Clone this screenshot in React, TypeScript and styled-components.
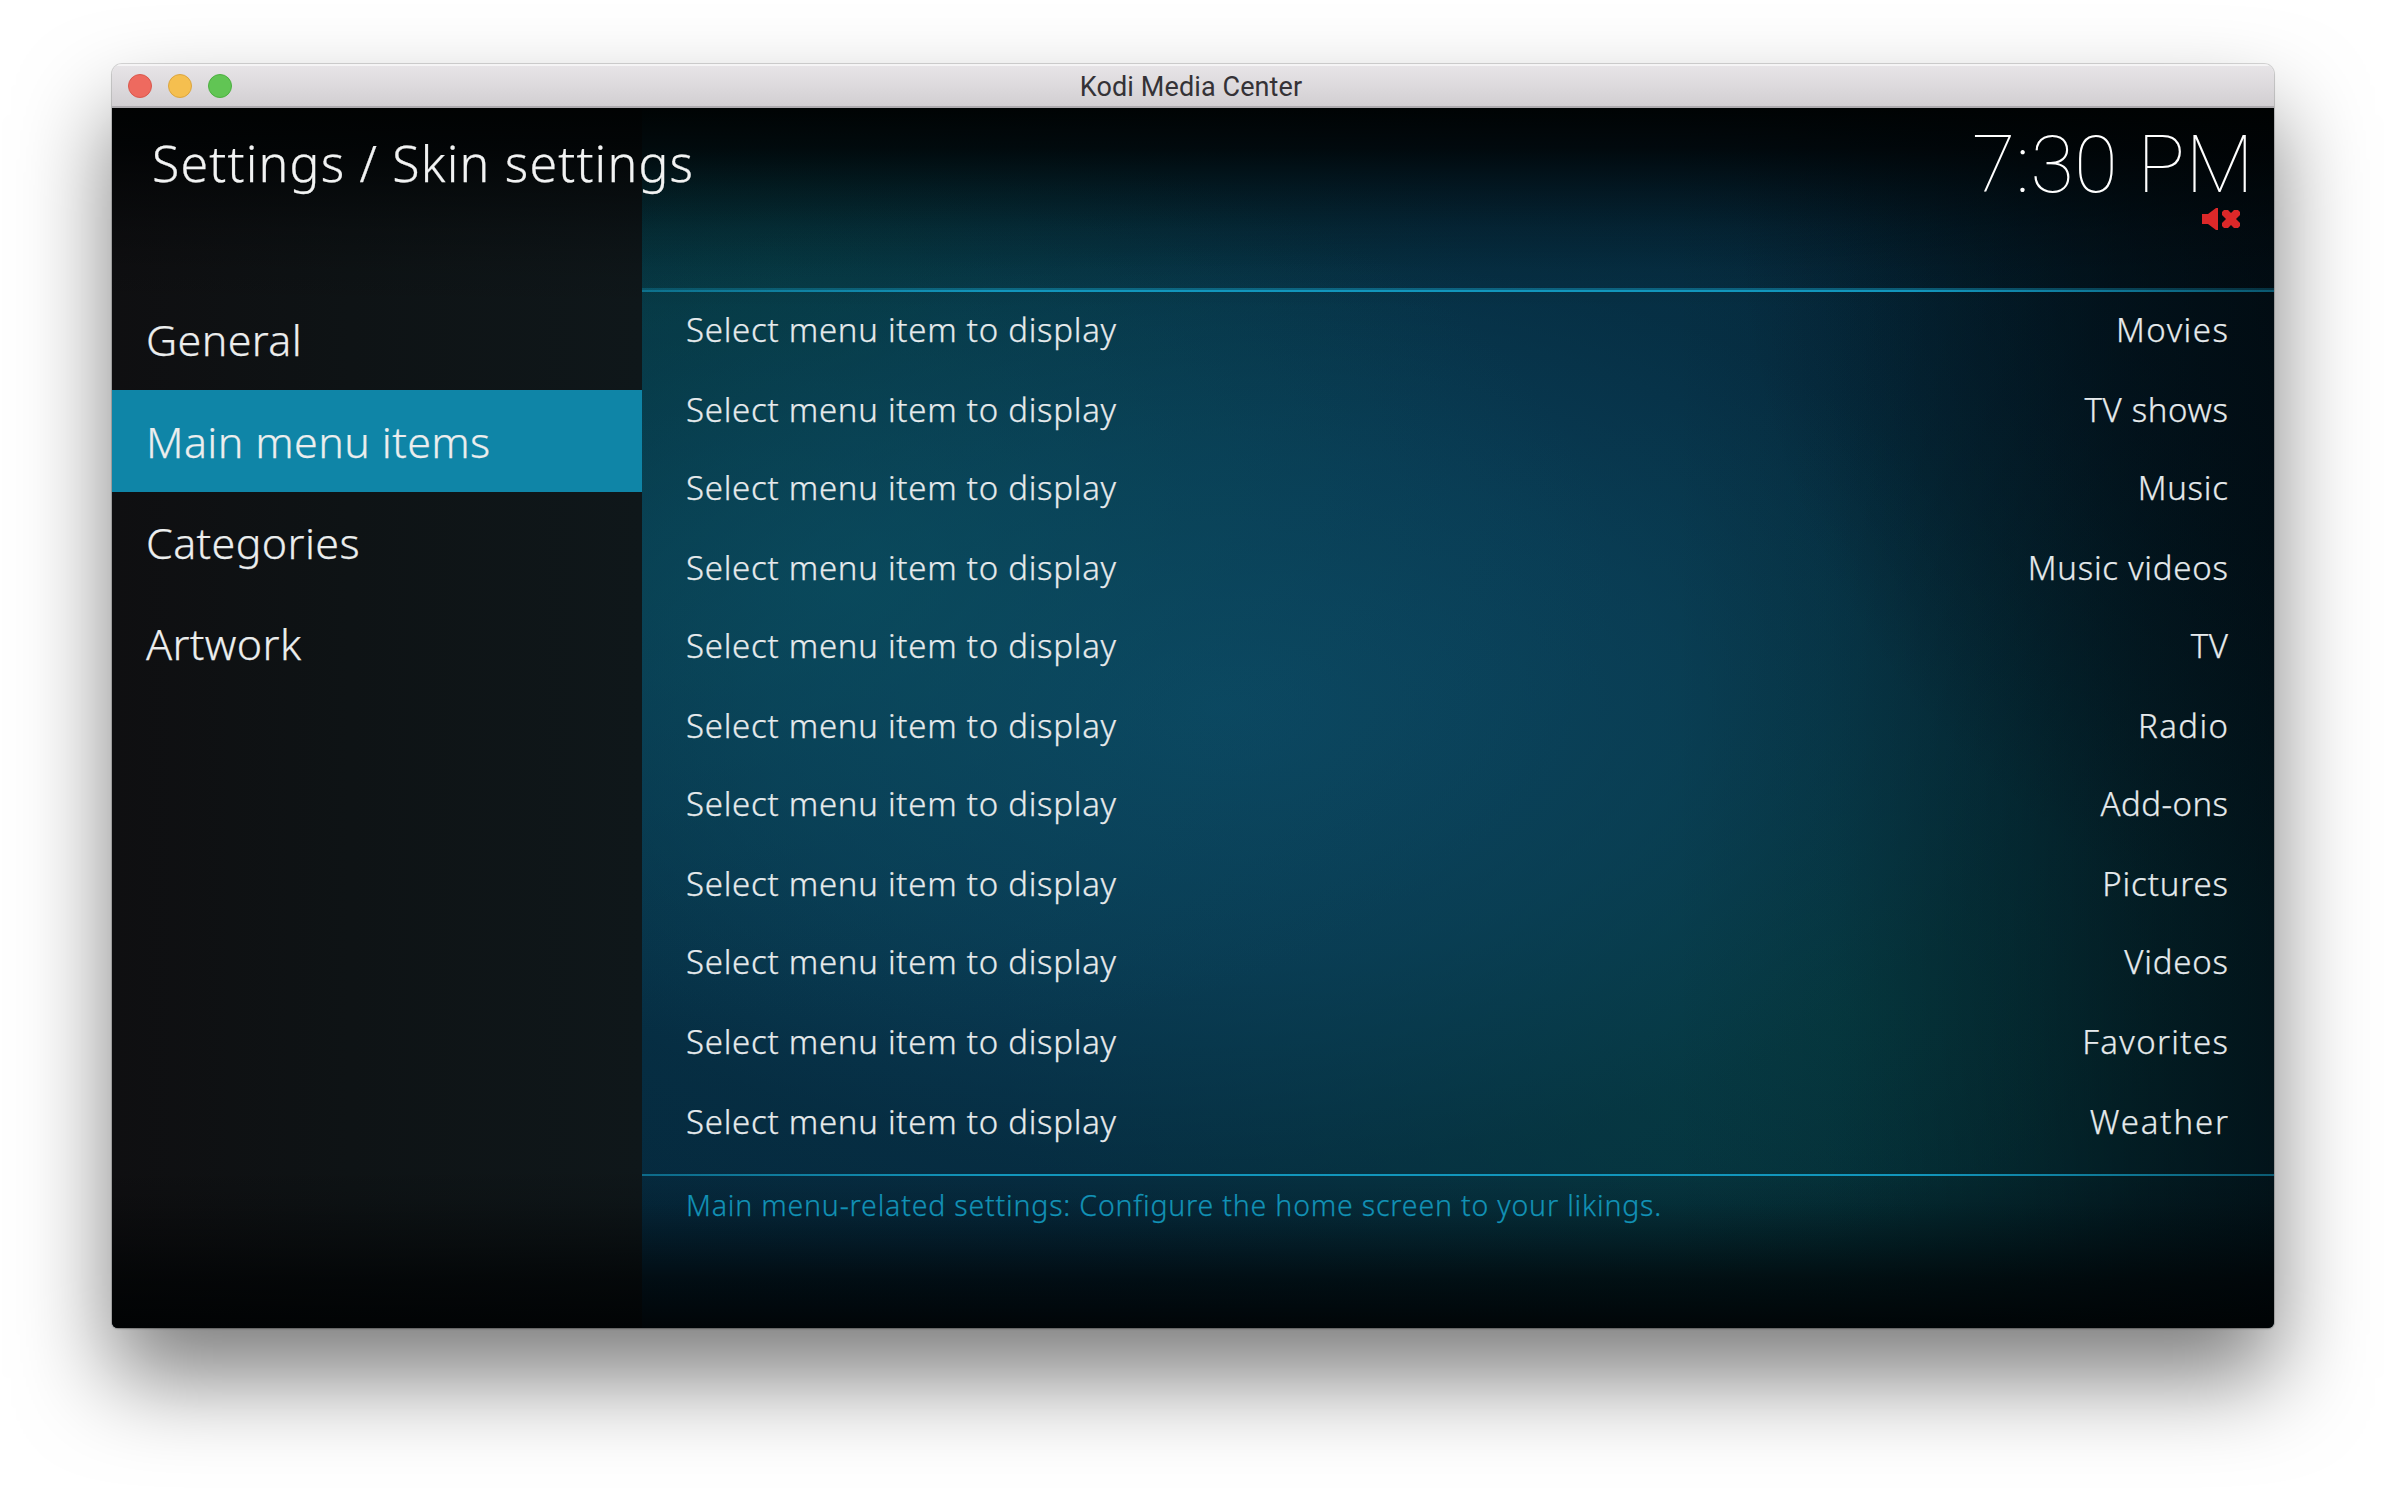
import React from "react";
import styled, { createGlobalStyle, css } from "styled-components";

const GlobalStyle = createGlobalStyle`
  * { box-sizing: border-box; }
  html, body { margin: 0; padding: 0; background: #fff; }
  body { overflow: hidden; }
`;

const uiFont = css`
  font-family: "Noto Sans", "Open Sans", sans-serif;
  font-weight: 350;
  -webkit-text-stroke: 0.25px currentColor;
  white-space: nowrap;
`;

const edgeShade = css`
  linear-gradient(
    to bottom,
    rgba(0, 2, 2, 0.97) 0,
    rgba(0, 2, 3, 0.83) 40px,
    rgba(0, 2, 3, 0.52) 80px,
    rgba(0, 2, 3, 0.25) 120px,
    rgba(0, 2, 3, 0.08) 160px,
    transparent 200px,
    transparent calc(100% - 160px),
    rgba(0, 2, 3, 0.12) calc(100% - 125px),
    rgba(0, 2, 3, 0.4) calc(100% - 88px),
    rgba(0, 2, 3, 0.7) calc(100% - 50px),
    rgba(0, 2, 3, 0.92) 100%
  )
`;

const Desktop = styled.div`
  width: 2386px;
  height: 1488px;
  padding: 64px 112px 160px;
  background: #fff;
  display: flex;
`;

const Window = styled.section`
  flex: 1;
  display: flex;
  flex-direction: column;
  border-radius: 10px 10px 6px 6px;
  box-shadow: 0 0 0 1px rgba(0, 0, 0, 0.14), 0 1px 2px rgba(0, 0, 0, 0.2),
    0 50px 92px rgba(0, 0, 0, 0.51);
  overflow: hidden;
`;

const TitleBar = styled.header`
  flex: none;
  height: 44px;
  padding: 0 16px;
  display: grid;
  grid-template-columns: 1fr auto 1fr;
  align-items: center;
  background: linear-gradient(#e8e5e8, #d1ced1);
  box-shadow: inset 0 2px #f5f4f5, inset 0 -2px #aeabaf;
`;

const Lights = styled.div`
  display: flex;
  gap: 16px;
`;

const Light = styled.span<{ $fill: string; $ring: string }>`
  width: 24px;
  height: 24px;
  border-radius: 50%;
  background: ${(p) => p.$fill};
  border: 1.5px solid ${(p) => p.$ring};
`;

const WindowTitle = styled.h1`
  margin: 0;
  padding: 2px 4px 0 0;
  font: 400 27px/42px Roboto, "Liberation Sans", sans-serif;
  letter-spacing: 0.1px;
  color: #343236;
`;

const Screen = styled.div`
  flex: 1;
  display: grid;
  grid-template-columns: 530px 1fr;
  grid-template-rows: 180px 888px 152px;
  background:
    ${edgeShade},
    linear-gradient(to right, transparent 1560px, rgba(1, 12, 17, 0.1) 1720px, rgba(1, 11, 15, 0.34) 1900px, rgba(1, 9, 13, 0.56) 2040px, rgba(1, 8, 12, 0.7) 2162px),
    radial-gradient(620px 760px at 2240px 60px, rgba(1, 8, 16, 0.7), rgba(1, 8, 16, 0.42) 50%, transparent),
    radial-gradient(760px 460px at 740px 480px, rgba(10, 80, 96, 0.62), rgba(10, 78, 94, 0.34) 45%, transparent),
    radial-gradient(1150px 640px at 1110px 600px, rgba(13, 74, 104, 0.85), rgba(12, 70, 98, 0.6) 40%, rgba(10, 62, 86, 0.22) 72%, transparent),
    radial-gradient(850px 620px at 1740px 900px, rgba(5, 62, 62, 0.85), rgba(5, 58, 60, 0.48) 50%, transparent),
    radial-gradient(700px 460px at 660px 160px, rgba(5, 60, 58, 0.6), rgba(5, 58, 58, 0.3) 50%, transparent),
    linear-gradient(#052c40, #05283c);
`;

const Sidebar = styled.nav`
  grid-column: 1;
  grid-row: 1 / -1;
  padding-top: 180px;
  background: ${edgeShade},
    linear-gradient(to right, #0f0f11, #0e1315 45%, #0f171a);
`;

const MenuItem = styled.div<{ $height: number; $active?: boolean }>`
  ${uiFont}
  height: ${(p) => p.$height}px;
  line-height: ${(p) => p.$height}px;
  padding: 1px 0 0 34px;
  font-size: 43px;
  letter-spacing: 0.38px;
  color: #eceeee;
  background: ${(p) => (p.$active ? "#0f85a7" : "transparent")};
`;

const TopBar = styled.div`
  grid-column: 1 / -1;
  grid-row: 1;
  z-index: 1;
  display: flex;
  justify-content: space-between;
  padding: 14px 20px 0 40px;
`;

const Breadcrumb = styled.h2`
  ${uiFont}
  margin: 0;
  font-size: 50px;
  line-height: 83px;
  letter-spacing: 1.2px;
  color: #f2f3f3;
`;

const Status = styled.div`
  display: flex;
  flex-direction: column;
  align-items: flex-end;
`;

const Clock = styled.time`
  font: 100 79px/86px Roboto, sans-serif;
  letter-spacing: 0.6px;
  white-space: nowrap;
  color: #fff;
`;

const MutedIcon = styled.svg`
  width: 38px;
  height: 22px;
  margin-right: 14px;
`;

const ruleFade = (r: string, a: number) =>
  `linear-gradient(to right, rgba(${r}, ${0.6 * a}), rgba(${r}, ${a}) 22%, rgba(${r}, ${a}) 78%, rgba(${r}, ${0.55 * a}))`;

const Panel = styled.main`
  grid-column: 2;
  grid-row: 2;
  display: flex;
  flex-direction: column;
  justify-content: space-between;
`;

const Rule = styled.div<{ $dim?: boolean }>`
  height: 2px;
  flex: none;
  background: ${(p) => ruleFade("18, 150, 188", p.$dim ? 0.5 : 1)};
`;

const Rows = styled.div`
  flex: 1;
  color: #e6eaec;
`;

const Row = styled.div<{ $height: number }>`
  ${uiFont}
  height: ${(p) => p.$height}px;
  line-height: 76px;
  display: flex;
  justify-content: space-between;
  padding: 0 46px 0 44px;
  font-size: 33px;
  letter-spacing: 0.72px;
`;

const Value = styled.span<{ $track: number }>`
  letter-spacing: ${(p) => p.$track}px;
  margin-right: ${(p) => -p.$track}px;
`;

const Hint = styled.footer`
  ${uiFont}
  grid-column: 2;
  grid-row: 3;
  padding-left: 44px;
  font-size: 28.5px;
  line-height: 58px;
  letter-spacing: 0.81px;
  color: #1292b6;
`;

const menu = [
  { label: "General", height: 102 },
  { label: "Main menu items", height: 102, active: true },
  { label: "Categories", height: 100 },
  { label: "Artwork", height: 102 },
];

const entries: { value: string; height: number; track: number }[] = [
  { value: "Movies", height: 80, track: 1.5 },
  { value: "TV shows", height: 78, track: 0.65 },
  { value: "Music", height: 80, track: 0.75 },
  { value: "Music videos", height: 78, track: 0.75 },
  { value: "TV", height: 80, track: 0.6 },
  { value: "Radio", height: 78, track: 1.4 },
  { value: "Add-ons", height: 80, track: 0.45 },
  { value: "Pictures", height: 78, track: 0.85 },
  { value: "Videos", height: 80, track: 0.8 },
  { value: "Favorites", height: 80, track: 1.35 },
  { value: "Weather", height: 78, track: 1.85 },
];

export default function App() {
  return (
    <>
      <GlobalStyle />
      <Desktop>
        <Window>
          <TitleBar>
            <Lights>
              <Light $fill="#ee6a5f" $ring="#d9584d" />
              <Light $fill="#f5bf4f" $ring="#dba53f" />
              <Light $fill="#61c554" $ring="#4caf40" />
            </Lights>
            <WindowTitle>Kodi Media Center</WindowTitle>
          </TitleBar>
          <Screen>
            <Sidebar>
              {menu.map((m) => (
                <MenuItem key={m.label} $height={m.height} $active={m.active}>
                  {m.label}
                </MenuItem>
              ))}
            </Sidebar>
            <TopBar>
              <Breadcrumb>Settings / Skin settings</Breadcrumb>
              <Status>
                <Clock>7:30 PM</Clock>
                <MutedIcon viewBox="0 0 38 22" fill="#dc2829">
                  <path d="M0 6h6l8-6h2v22h-2l-8-6H0z" />
                  <path d="M20 4l2-2h4l3 3 3-3h4l2 2v3l-4 4 4 4v3l-2 2h-4l-3-3-3 3h-4l-2-2v-3l4-4-4-4z" />
                </MutedIcon>
              </Status>
            </TopBar>
            <Panel>
              <Rule $dim />
              <Rule />
              <Rows>
                {entries.map((e) => (
                  <Row key={e.value} $height={e.height}>
                    <span>Select menu item to display</span>
                    <Value $track={e.track}>{e.value}</Value>
                  </Row>
                ))}
              </Rows>
              <Rule />
            </Panel>
            <Hint>
              Main menu-related settings: Configure the home screen to your likings.
            </Hint>
          </Screen>
        </Window>
      </Desktop>
    </>
  );
}
